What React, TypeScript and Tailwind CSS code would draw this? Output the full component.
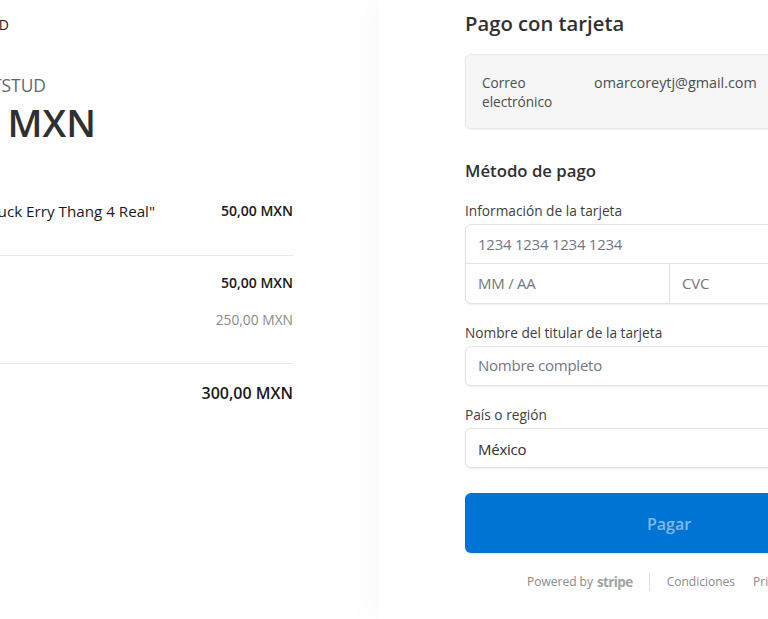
const labelCls = 'text-[13.7px] leading-[20px] font-medium text-[#404040]';
const fieldCls = 'text-[15px] leading-[24px] tracking-[-0.25px]';

const RightAmount = ({ w, className, children }: { w: string; className: string; children: React.ReactNode }) => (
  <div className={`flex justify-end whitespace-nowrap ${w} ${className}`}>{children}</div>
);

const Summary = () => (
  <div className="w-[379px] h-full shrink-0 overflow-hidden bg-white">
    <RightAmount w="w-[9px]" className="pt-[15px] text-[14px] leading-[20px] font-medium text-[#1a1a1a]">
      ARTSTUD
    </RightAmount>
    <RightAmount w="w-[46px]" className="mt-[39px] text-[17.4px] leading-[22px] font-medium text-[#666666]">
      ARTSTUD
    </RightAmount>
    <RightAmount w="w-[96px]" className="mt-[2px] text-[38px] leading-[48px] font-semibold text-[#303030]">
      300,00 MXN
    </RightAmount>
    <div className="w-[293px] mt-[55px] flex justify-between text-[15.2px] leading-[20px] font-medium text-[#1a1a1a]">
      <RightAmount w="w-[155px]" className="">"Fuck Erry Thang 4 Real"</RightAmount>
      <span className="text-[14px] font-semibold">50,00 MXN</span>
    </div>
    <div className="w-[293px] mt-[34px] border-t border-[#e8e8e8]" />
    <div className="w-[293px] mt-[17px] text-right text-[14px] leading-[20px] font-semibold text-[#1a1a1a]">50,00 MXN</div>
    <div className="w-[293px] mt-[17px] text-right text-[13.8px] leading-[20px] text-[#8a8a8a]">250,00 MXN</div>
    <div className="w-[293px] mt-[33px] border-t border-[#e8e8e8]" />
    <div className="w-[293px] mt-[17px] text-right text-[16px] leading-[24px] font-semibold text-[#1a1a1a]">300,00 MXN</div>
  </div>
);

const Field = ({ label, value, className }: { label: string; value: string; className: string }) => (
  <div>
    <div className={labelCls}>{label}</div>
    <div className={`mt-[3px] h-[40px] px-[12px] flex items-center bg-white rounded-[6px] border border-[#e3e3e3] shadow-[0_1px_2px_rgba(0,0,0,0.07)] ${fieldCls} ${className}`}>
      {value}
    </div>
  </div>
);

const App = () => (
  <div className="w-[768px] h-[619px] overflow-hidden flex bg-white font-['Open_Sans',sans-serif]">
    <Summary />
    <div className="relative h-full pl-[86px] bg-white shadow-[-15px_0_30px_rgba(0,0,0,0.02)]">
      <div className="w-[408px]">
        <h1 className="pt-[8px] text-[20.25px] leading-[30px] font-semibold text-[#303030]">Pago con tarjeta</h1>
        <div className="mt-[16px] h-[75px] px-[16px] pt-[18px] flex bg-[#f6f6f6] rounded-[6px] border border-[#e6e6e6] shadow-[0_1px_2px_rgba(0,0,0,0.06)]">
          <div className="w-[112px] text-[13.6px] leading-[19px] text-[#4d4d4d]">
            Correo
            <br />
            electrónico
          </div>
          <div className="text-[14.35px] leading-[19px] text-[#4d4d4d]">omarcoreytj@gmail.com</div>
        </div>
        <h2 className="mt-[30px] text-[16.75px] leading-[24px] font-semibold text-[#303030]">Método de pago</h2>
        <div className="mt-[18px]">
          <div className={labelCls}>Información de la tarjeta</div>
          <div className="mt-[3px] h-[80px] bg-white rounded-[6px] border border-[#e3e3e3] shadow-[0_1px_2px_rgba(0,0,0,0.07)]">
            <div className={`h-[39px] px-[12px] flex items-center border-b border-[#e3e3e3] text-[#757680] ${fieldCls}`}>1234 1234 1234 1234</div>
            <div className="h-[39px] flex">
              <div className={`w-[204px] px-[12px] pb-[2px] flex items-center border-r border-[#e3e3e3] text-[#757680] ${fieldCls}`}>MM / AA</div>
              <div className={`px-[12px] pb-[2px] flex items-center text-[#757680] ${fieldCls}`}>CVC</div>
            </div>
          </div>
        </div>
        <div className="mt-[19px]">
          <Field label="Nombre del titular de la tarjeta" value="Nombre completo" className="pb-[2px] text-[#757680]" />
        </div>
        <div className="mt-[19px]">
          <Field label="País o región" value="México" className="pt-[2px] text-[#303030]" />
        </div>
        <button className="mt-[25px] w-full h-[60px] pt-[1px] rounded-[6px] bg-[#0074d4] text-[16px] font-semibold text-[#80b9e9] shadow-[0_1px_2px_rgba(0,0,0,0.1)]">
          Pagar
        </button>
        <div className="mt-[20px] flex items-center justify-center text-[12px] leading-[18px] text-[#8a8a8a]">
          <span>Powered by</span>
          <span className="ml-[4px] text-[13.5px] font-bold text-[#a3a3a3] tracking-[-0.6px]">stripe</span>
          <div className="ml-[16px] mr-[17px] h-[18px] border-l border-[#e3e3e3]" />
          <span>Condiciones</span>
          <span className="ml-[18px]">Privacidad</span>
        </div>
      </div>
    </div>
  </div>
);

export default App;
